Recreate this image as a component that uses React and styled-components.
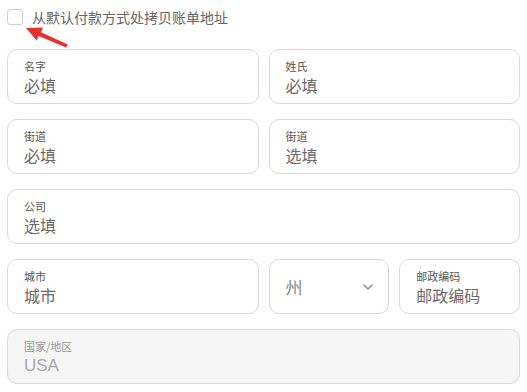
import React from "react";
import styled, { createGlobalStyle } from "styled-components";

const Global = createGlobalStyle`
  html, body { margin: 0; padding: 0; background: #fff; }
  body { font-family: "Noto Sans CJK SC", "Noto Sans", sans-serif; }
`;

const Page = styled.div`
  position: relative;
  width: 527px;
  box-sizing: border-box;
  padding: 9px 7px 0 7px;
`;

const CheckRow = styled.label`
  display: flex;
  align-items: center;
  gap: 9px;
  height: 16px;
  margin-bottom: 24px;
  font-size: 14px;
  color: #666;
  line-height: 16px;
`;

const Check = styled.span`
  width: 14px;
  height: 14px;
  border: 1px solid #cfcfcf;
  border-radius: 3px;
  background: #fff;
  flex: none;
`;

const Grid = styled.div`
  display: grid;
  grid-template-columns: repeat(4, 1fr);
  column-gap: 10px;
  row-gap: 15px;
`;

const Field = styled.div`
  grid-column: span ${(p) => p.$span || 2};
  height: 55px;
  box-sizing: border-box;
  border: 1px solid #d9d9d9;
  border-radius: 10px;
  padding: 1px 16px 0 16px;
  display: flex;
  flex-direction: column;
  justify-content: center;
  background: ${(p) => (p.$disabled ? "#f6f6f6" : "#fff")};
`;

const Label = styled.div`
  font-size: 11px;
  line-height: 16px;
  color: ${(p) => (p.$disabled ? "#999" : "#555")};
`;

const Value = styled.div`
  font-size: ${(p) => (p.$latin ? "17px" : "16px")};
  line-height: 23px;
  color: ${(p) => (p.$disabled ? "#a8a8a8" : "#6a6a6a")};
  font-family: ${(p) => (p.$latin ? '"Liberation Sans", Arial, sans-serif' : "inherit")};
`;

const SelectBox = styled(Field)`
  flex-direction: row;
  align-items: center;
  justify-content: space-between;
  padding: 0 14px 0 16px;
`;

const SelectText = styled.span`
  font-size: 17px;
  color: #888;
`;

const Arrow = styled.svg`
  position: absolute;
  left: 24px;
  top: 24px;
  pointer-events: none;
`;

function Input({ label, value, span, disabled, latin }) {
  return (
    <Field $span={span} $disabled={disabled}>
      <Label $disabled={disabled}>{label}</Label>
      <Value $disabled={disabled} $latin={latin}>{value}</Value>
    </Field>
  );
}

export default function App() {
  return (
    <>
      <Global />
      <Page>
        <CheckRow>
          <Check />
          从默认付款方式处拷贝账单地址
        </CheckRow>
        <Grid>
          <Input label="名字" value="必填" />
          <Input label="姓氏" value="必填" />
          <Input label="街道" value="必填" />
          <Input label="街道" value="选填" />
          <Input label="公司" value="选填" span={4} />
          <Input label="城市" value="城市" />
          <SelectBox $span={1}>
            <SelectText>州</SelectText>
            <svg width="12" height="8" viewBox="0 0 12 8">
              <path d="M2 2 L6 6 L10 2" fill="none" stroke="#888" strokeWidth="1.4" strokeLinecap="round" strokeLinejoin="round" />
            </svg>
          </SelectBox>
          <Input label="邮政编码" value="邮政编码" span={1} />
          <Input label="国家/地区" value="USA" span={4} disabled latin />
        </Grid>
        <Arrow width="48" height="28" viewBox="0 0 48 28">
          <polygon
            points="2,4 19,3.5 17,8.2 43.8,20.4 42.2,23.6 14.6,12 12.6,16.5"
            fill="#e8322a"
          />
        </Arrow>
      </Page>
    </>
  );
}
